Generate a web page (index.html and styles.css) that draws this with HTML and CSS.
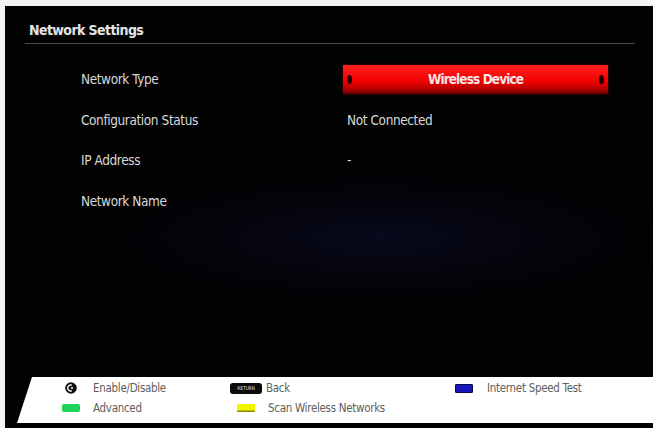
FILE: index.html
```html
<!DOCTYPE html>
<html>
<head>
<meta charset="utf-8">
<link rel="stylesheet" href="styles.css">
</head>
<body>
<div class="screen">
  <div class="header"><span class="title">Network Settings</span></div>
  <div class="rows">
    <div class="row"><div class="label">Network Type</div>
      <div class="value"><div class="bar"><span class="dot"></span><span class="bar-text">Wireless Device</span><span class="dot"></span></div></div></div>
    <div class="row"><div class="label">Configuration Status</div><div class="value text">Not Connected</div></div>
    <div class="row"><div class="label">IP Address</div><div class="value text">-</div></div>
    <div class="row"><div class="label">Network Name</div><div class="value text"></div></div>
  </div>
  <div class="spacer"></div>
  <div class="footer">
    <div class="item c1"><span class="ic w18"><svg width="12" height="12" viewBox="0 0 12 12"><circle cx="6" cy="6" r="5.8" fill="#111"/><path d="M6.8 3.2 A3 3 0 1 0 6.8 8.8" fill="none" stroke="#fff" stroke-width="1.4"/><circle cx="7" cy="6" r="1" fill="#fff"/></svg></span><span>Enable/Disable</span></div>
    <div class="item c2"><span class="ic w32"><span class="ret">RETURN</span></span><span class="t-back">Back</span></div>
    <div class="item c3"><span class="ic w18"><span class="key blue"></span></span><span>Internet Speed Test</span></div>
    <div class="item c1"><span class="ic w18"><span class="key green"></span></span><span>Advanced</span></div>
    <div class="item c2"><span class="ic w32"><span class="key yellow"></span></span><span class="t-scan">Scan Wireless Networks</span></div>
    <div class="item c3"></div>
  </div>
  <div class="bottom"></div>
</div>
</body>
</html>
```
FILE: styles.css
```css
html, body {
  margin: 0;
  padding: 0;
  background: #f4f4f4;
}
body {
  width: 653px;
  height: 428px;
  overflow: hidden;
  font-family: "DejaVu Sans Condensed", "DejaVu Sans", sans-serif;
  font-stretch: condensed;
}
.screen {
  margin: 6px 0 0 5px;
  height: 422px;
  display: flex;
  flex-direction: column;
  background:
    radial-gradient(ellipse 300px 70px at 58% 55%, rgba(10, 12, 36, 0.75), rgba(6, 7, 22, 0.35) 60%, rgba(0, 0, 0, 0) 100%),
    #020203;
}
.header {
  margin-left: 20px;
  width: 610px;
  padding: 14px 0 3px 4px;
  border-bottom: 1px solid #4a4a4a;
  box-sizing: border-box;
}
.title {
  display: block;
  line-height: 20px;
  font-size: 14px;
  font-weight: bold;
  color: #e4e4e4;
  letter-spacing: -0.6px;
}
.rows {
  margin-top: 15px;
  display: flex;
  flex-direction: column;
}
.row {
  height: 40.5px;
  display: grid;
  grid-template-columns: 262px 265px;
  align-items: center;
  padding-left: 76px;
}
.label, .value.text {
  font-size: 13.5px;
  color: #d8d8d8;
  letter-spacing: -0.4px;
}
.value.text {
  padding-left: 4px;
}
.bar {
  height: 29px;
  width: 265px;
  display: flex;
  align-items: center;
  justify-content: space-between;
  padding: 0 4px;
  box-sizing: border-box;
  background: linear-gradient(#ff2020 0%, #f20000 55%, #b00000 85%, #600000 100%);
  box-shadow: 0 0 3px rgba(150, 0, 0, 0.6);
}
.bar-text {
  font-size: 13.5px;
  font-weight: bold;
  color: #f6e6e6;
  letter-spacing: -0.9px;
}
.dot {
  width: 5px;
  height: 9px;
  border-radius: 50%;
  background: #200000;
}
.spacer { flex: 1; }
.footer {
  margin-left: 12px;
  height: 46px;
  background: #ffffff;
  clip-path: polygon(15px 0, 100% 0, 100% 100%, 0 100%);
  display: grid;
  grid-template-columns: 168px 225px 1fr;
  grid-auto-rows: 20px;
  padding: 1px 0 0 45px;
  box-sizing: border-box;
}
.item {
  display: flex;
  align-items: center;
  font-size: 11.5px;
  color: #606060;
  letter-spacing: -0.3px;
}
.c1 .ic { margin-right: 13px; }
.c2 .ic { margin-right: 4px; }
.c3 .ic { margin-right: 14px; }
.t-scan { margin-left: 2px; }
.ic {
  display: flex;
  align-items: center;
  justify-content: center;
  height: 12px;
}
.w18 { width: 18px; }
.w32 { width: 32px; }
.key {
  width: 18px;
  height: 8px;
  border-radius: 1px;
}
.green { background: #1ed25a; border-radius: 2px; }
.yellow { background: linear-gradient(#f4f400 70%, #6a6a00 100%); }
.blue { background: #1515b8; border: 1px solid #08084a; box-sizing: border-box; height: 9px; }
.ret {
  width: 32px;
  height: 11px;
  border-radius: 3px;
  background: #0c0c0c;
  color: #ddd;
  font-size: 5px;
  line-height: 11px;
  text-align: center;
  letter-spacing: -0.2px;
}
.bottom {
  height: 5px;
  background: #020203;
}
```
